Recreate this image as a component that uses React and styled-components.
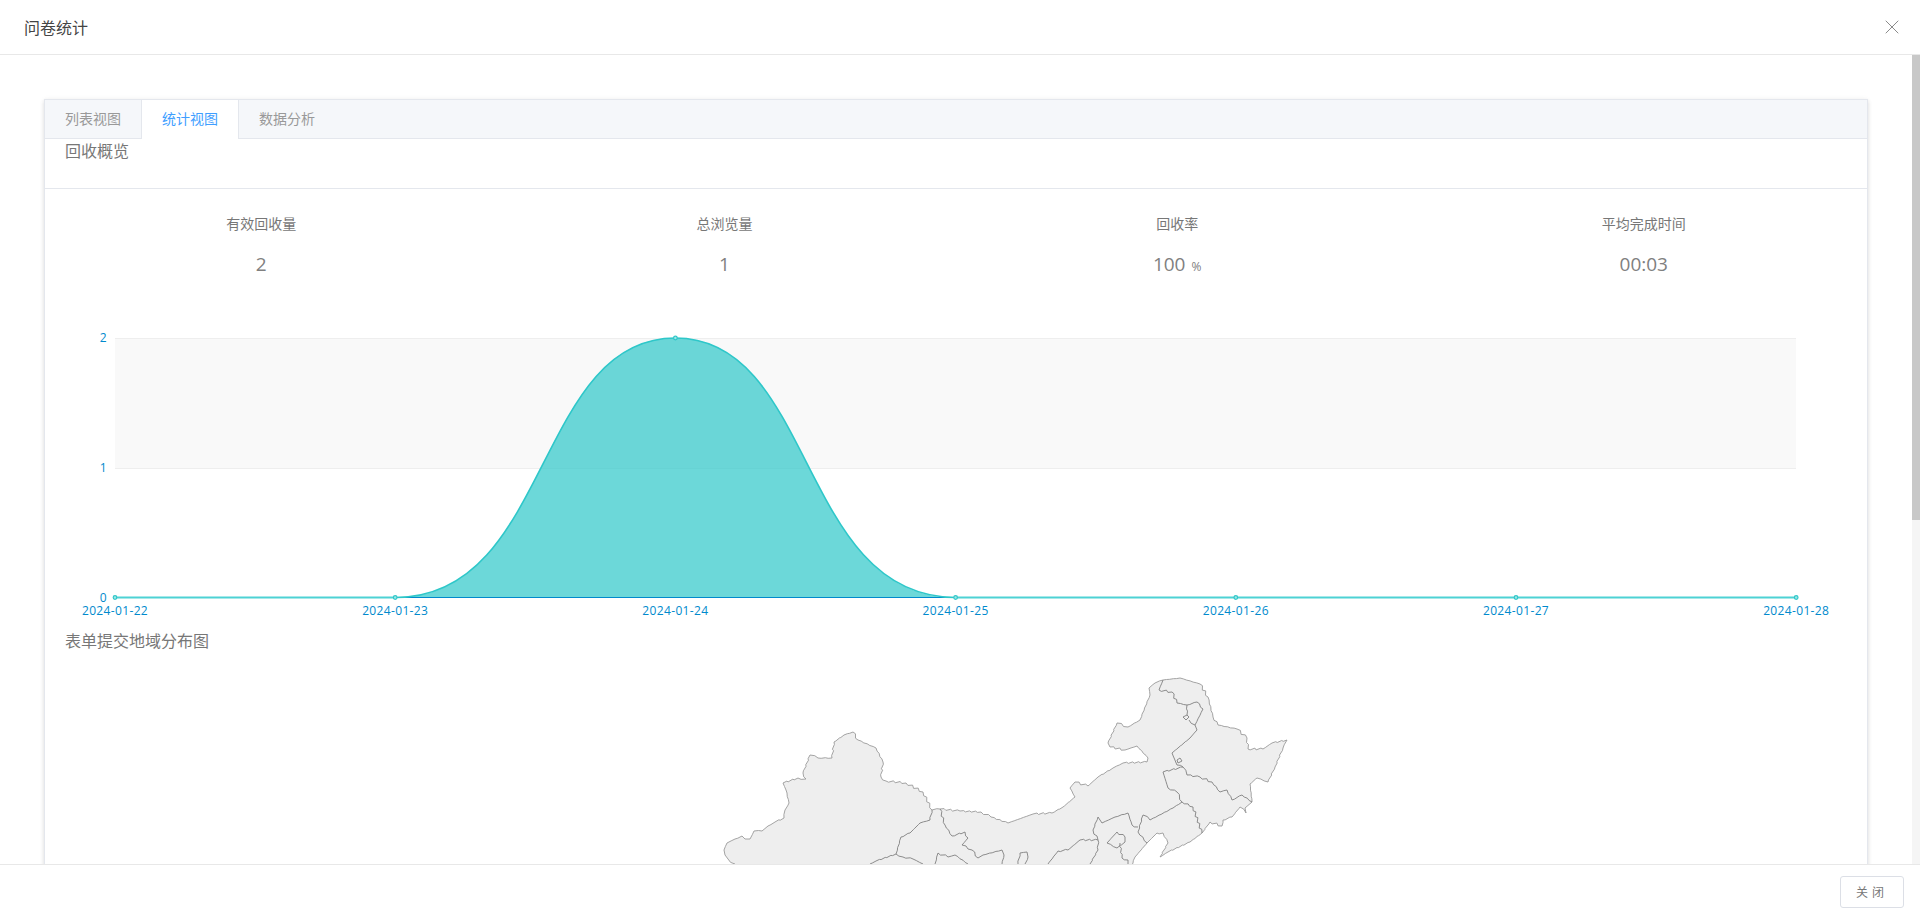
import React from 'react';
import styled, { createGlobalStyle } from 'styled-components';
import { X } from 'lucide-react';

const GlobalStyle = createGlobalStyle`
html, body {
  margin: 0;
  padding: 0;
  height: 100%;
  overflow: hidden;
  background: #fff;
}
* {
  box-sizing: border-box;
}
`;

const Dialog = styled.div`
display: flex;
flex-direction: column;
height: 919px;
font-family: "Open Sans", "Noto Sans CJK SC", sans-serif;
color: #606266;
`;

const Header = styled.div`
flex: none;
display: flex;
align-items: center;
justify-content: space-between;
height: 55px;
padding: 0 16px 0 24px;
border-bottom: 1px solid #e8e8e8;
`;

const DialogTitle = styled.div`
font-size: 16px;
color: #444;
padding-bottom: 1px;
`;

const CloseIcon = styled(X)`
color: #8a8a8a;
display: block;
`;

const Middle = styled.div`
flex: 1;
min-height: 0;
display: flex;
`;

const Body = styled.div`
flex: 1;
min-width: 0;
overflow: hidden;
padding: 44px;
`;

const ScrollTrack = styled.div`
flex: none;
width: 8px;
background: #f5f5f5;
`;

const ScrollThumb = styled.div`
height: 465px;
background: #c8c8c8;
`;

const Card = styled.div`
border: 1px solid #e4e7ed;
background: #fff;
box-shadow: 0 2px 4px rgba(0, 0, 0, 0.12), 0 0 6px rgba(0, 0, 0, 0.04);
`;

const TabBar = styled.div`
display: flex;
height: 39px;
background: #f5f7fa;
border-bottom: 1px solid #e4e7ed;
`;

const Tab = styled.div`
height: 39px;
padding: 0 20px;
line-height: 38px;
font-size: 14px;
color: ${({ $active }) => ($active ? '#409eff' : '#999')};
background: ${({ $active }) => ($active ? '#fff' : 'transparent')};
border-left: 1px solid ${({ $active }) => ($active ? '#e4e7ed' : 'transparent')};
border-right: 1px solid ${({ $active }) => ($active ? '#e4e7ed' : 'transparent')};
&:first-child {
  border: 0;
}
&:last-child {
  margin-left: -1px;
}
`;

const SectionTitle = styled.div`
padding-left: 20px;
font-size: 16px;
line-height: 22px;
color: #777;
`;

const OverviewHead = styled.div`
height: 50px;
padding-top: 1px;
border-bottom: 1px solid #e4e7ed;
`;

const Stats = styled.div`
display: flex;
justify-content: space-around;
margin: 0 -19px;
padding-top: 25px;
`;

const Stat = styled.div`
display: flex;
flex-direction: column;
align-items: center;
`;

const StatLabel = styled.div`
font-size: 14px;
line-height: 20px;
color: #777;
`;

const StatValue = styled.div`
margin-top: 18px;
font-size: 19px;
line-height: 24px;
color: #808080;
`;

const Unit = styled.span`
font-size: 12px;
margin-left: 6px;
`;

const ChartSvg = styled.svg`
display: block;
width: 1822px;
height: 307px;
margin-top: 43px;
`;

const AxisText = styled.text`
font-size: 12px;
fill: #008acd;
font-family: "Open Sans", sans-serif;
letter-spacing: 0.35px;
`;

const MapTitle = styled(SectionTitle)`
margin-top: 1px;
`;

const MapSvg = styled.svg`
display: block;
width: 1822px;
height: 710px;
margin-top: 1px;
`;

const Footer = styled.div`
flex: none;
display: flex;
align-items: center;
justify-content: flex-end;
height: 55px;
padding: 0 16px 1px 0;
border-top: 1px solid #e8e8e8;
background: #fff;
`;

const CloseButton = styled.button`
width: 64px;
height: 32px;
padding: 0;
font-family: inherit;
font-size: 12px;
letter-spacing: 4px;
color: #777;
background: #fff;
border: 1px solid #dcdfe6;
border-radius: 3px;
`;

const stats = [
  { label: '有效回收量', value: '2' },
  { label: '总浏览量', value: '1' },
  { label: '回收率', value: '100', unit: '%' },
  { label: '平均完成时间', value: '00:03' },
];

const days = ['2024-01-22', '2024-01-23', '2024-01-24', '2024-01-25', '2024-01-26', '2024-01-27', '2024-01-28'];
const dayX = days.map((_, i) => 115 + i * 280.2);
const dayY = [597.5, 597.5, 338, 597.5, 597.5, 597.5, 597.5];

const hump = 'M395.2 597.5 C551 597.5 535 338 675.4 338 C815 338 799 597.5 955.6 597.5';

// map borders, in page coordinates of the reference
const outline = [
  [735, 864], [728, 859], [725, 855], [724, 850], [727, 843], [735, 839], [742, 836], [745, 839], [750, 839],
  [754, 831], [762, 831], [768, 826], [775, 822], [784, 818], [785, 810], [789, 803], [786, 790], [783, 783],
  [798, 778], [806, 779], [803, 773], [810, 755], [818, 758], [832, 758], [834, 742], [844, 735], [853, 732],
  [858, 740], [876, 748], [883, 762], [881, 777], [886, 781], [906, 783], [923, 792], [932, 810], [940, 809],
  [960, 811], [981, 812], [991, 817], [1008, 823], [1033, 814], [1052, 813], [1063, 807], [1075, 797],
  [1070, 788], [1075, 782], [1088, 786], [1098, 777], [1113, 768], [1123, 763], [1147, 762], [1148, 758],
  [1137, 746], [1125, 750], [1110, 747], [1108, 743], [1117, 723], [1128, 727], [1140, 720], [1150, 695],
  [1149, 688], [1155, 683], [1163, 680], [1180, 678], [1200, 684], [1208, 697], [1213, 717], [1218, 725],
  [1237, 729], [1247, 738], [1248, 749], [1263, 749], [1272, 743], [1287, 740], [1283, 748], [1275, 767],
  [1268, 782], [1257, 778], [1250, 784], [1252, 802], [1245, 808], [1246, 813], [1240, 807], [1232, 817],
  [1223, 820], [1222, 826], [1210, 822], [1202, 833], [1190, 842], [1168, 852], [1160, 857], [1168, 843],
  [1163, 833], [1157, 833], [1147, 843], [1135, 857], [1130, 870], [1130, 920], [735, 920],
];

const borders = [
  [[1163, 680], [1159, 690], [1172, 692], [1177, 703], [1187, 705], [1197, 702], [1203, 709], [1195, 725], [1197, 730], [1190, 738], [1172, 753], [1177, 765], [1183, 767]],
  [[1187, 705], [1187, 715], [1183, 717], [1186, 720], [1189, 717], [1187, 715]],
  [[1189, 720], [1195, 725]],
  [[1177, 760], [1180, 758], [1182, 761], [1178, 763], [1177, 760]],
  [[1183, 767], [1187, 775], [1200, 777], [1212, 782], [1220, 792], [1227, 790], [1232, 800], [1242, 795], [1252, 802]],
  [[1183, 767], [1163, 772], [1168, 788], [1177, 792], [1182, 802]],
  [[1182, 802], [1193, 807], [1202, 833]],
  [[1182, 802], [1173, 808], [1150, 820], [1143, 815], [1138, 832], [1147, 843]],
  [[1138, 827], [1132, 825], [1128, 813], [1115, 817], [1102, 823], [1098, 817], [1093, 830], [1098, 840], [1080, 840], [1068, 850], [1058, 851], [1048, 864]],
  [[1098, 840], [1098, 850], [1090, 864]],
  [[1107, 843], [1117, 832], [1125, 837], [1125, 842], [1117, 848], [1107, 843]],
  [[1120, 843], [1122, 858], [1128, 860], [1128, 864]],
  [[1018, 864], [1020, 853], [1027, 852], [1028, 857], [1025, 864]],
  [[932, 810], [930, 820], [920, 823], [910, 833], [901, 837], [896, 854], [876, 861], [870, 864]],
  [[896, 854], [903, 857], [913, 859], [923, 864]],
  [[940, 809], [945, 825], [952, 836], [965, 832], [968, 838], [962, 845], [972, 850], [978, 858], [983, 855], [1002, 850], [1004, 855], [1002, 864]],
  [[935, 864], [938, 853], [948, 857], [955, 855], [968, 864]],
];

// break long segments up a little so the borders look hand traced
const jag = (points, close) => {
  const out = [];
  points.forEach((p, i) => {
    const next = points[i + 1];
    out.push(p);
    if (!next) return;
    const len = Math.hypot(next[0] - p[0], next[1] - p[1]);
    const steps = Math.floor(len / 3);
    for (let s = 1; s < steps; s++) {
      const t = s / steps;
      const wob = Math.sin((p[0] + s) * 12.9 + (p[1] + s) * 78.2) * 0.9;
      out.push([p[0] + (next[0] - p[0]) * t + wob, p[1] + (next[1] - p[1]) * t - wob]);
    }
  });
  const d = out.map((p, i) => `${i ? 'L' : 'M'}${p[0].toFixed(1)} ${p[1].toFixed(1)}`).join(' ');
  return close ? `${d} Z` : d;
};

const Chart = () => (
  <ChartSvg viewBox="45 322 1822 307">
    <rect x="115" y="338" width="1681" height="130" fill="#f9f9f9" />
    <path d="M115 338.5 H1796 M115 468.5 H1796" stroke="#eeeeee" fill="none" />
    <path d={`${hump} Z`} fill="#2ec7c9" fillOpacity="0.7" />
    <path d="M115 597.5 H1796" stroke="#008acd" strokeWidth="1" fill="none" />
    <path d={hump} stroke="#2ec7c9" strokeWidth="1.6" fill="none" />
    <path d="M115 597.5 H395 M955.6 597.5 H1796" stroke="#4dd2d4" strokeWidth="2" fill="none" />
    {dayX.map((x, i) => (
      <circle key={x} cx={x} cy={dayY[i]} r="1.8" fill="#9fe6e6" stroke="#2ec7c9" strokeWidth="1.2" />
    ))}
    {['2', '1', '0'].map((t, i) => (
      <AxisText key={t} x="107" y={341.5 + i * 130} textAnchor="end">{t}</AxisText>
    ))}
    {days.map((d, i) => (
      <AxisText key={d} x={dayX[i]} y="615" textAnchor="middle">{d}</AxisText>
    ))}
  </ChartSvg>
);

const ChinaMap = () => (
  <MapSvg viewBox="45 653 1822 710">
    <path d={jag(outline, true)} fill="#eeeeee" stroke="#9a9a9a" strokeWidth="0.9" />
    {borders.map((b, i) => (
      <path key={i} d={jag(b)} fill="none" stroke="#808080" strokeWidth="0.9" />
    ))}
  </MapSvg>
);

export default function App() {
  return (
    <Dialog>
      <GlobalStyle />
      <Header>
        <DialogTitle>问卷统计</DialogTitle>
        <CloseIcon size={24} strokeWidth={1} />
      </Header>
      <Middle>
        <Body>
          <Card>
            <TabBar>
              <Tab>列表视图</Tab>
              <Tab $active>统计视图</Tab>
              <Tab>数据分析</Tab>
            </TabBar>
            <OverviewHead>
              <SectionTitle>回收概览</SectionTitle>
            </OverviewHead>
            <Stats>
              {stats.map((s) => (
                <Stat key={s.label}>
                  <StatLabel>{s.label}</StatLabel>
                  <StatValue>
                    {s.value}
                    {s.unit && <Unit>{s.unit}</Unit>}
                  </StatValue>
                </Stat>
              ))}
            </Stats>
            <Chart />
            <MapTitle>表单提交地域分布图</MapTitle>
            <ChinaMap />
          </Card>
        </Body>
        <ScrollTrack>
          <ScrollThumb />
        </ScrollTrack>
      </Middle>
      <Footer>
        <CloseButton>关闭</CloseButton>
      </Footer>
    </Dialog>
  );
}
